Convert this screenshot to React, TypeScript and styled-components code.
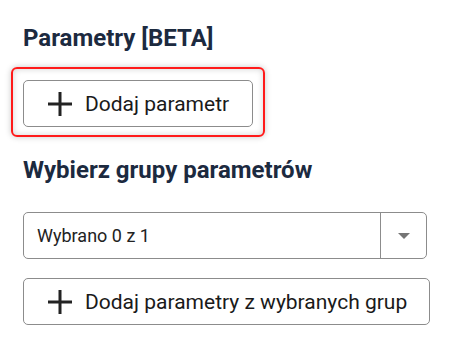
import React from "react";
import styled, { createGlobalStyle } from "styled-components";

const Global = createGlobalStyle`
  html, body { margin: 0; padding: 0; background: #ffffff; }
  body { font-family: Roboto, "Noto Sans", Arial, sans-serif; }
`;

const Page = styled.div`
  display: flex;
  flex-direction: column;
  align-items: flex-start;
  padding: 24px 0 0 23px;
`;

const Heading = styled.h2<{ $mt?: number }>`
  margin: ${(p) => p.$mt ?? 0}px 0 0 0;
  font-size: 24px;
  line-height: 28px;
  font-weight: 700;
  color: #1c2a3f;
`;

const FocusFrame = styled.div`
  margin: 15px 0 0 -12px;
  padding: 11px 10px 8px 10px;
  border: 2px solid #ff1a1a;
  border-radius: 6px;
  box-shadow: 0 0 6px rgba(0, 0, 0, 0.22), inset 0 0 6px rgba(0, 0, 0, 0.18);
`;

const Button = styled.button<{ $w: number; $mt?: number }>`
  display: flex;
  align-items: center;
  gap: 13px;
  box-sizing: border-box;
  width: ${(p) => p.$w}px;
  height: 47px;
  margin-top: ${(p) => p.$mt ?? 0}px;
  padding: 0 0 0 24px;
  background: #ffffff;
  border: 1px solid #8c8c8c;
  border-radius: 5px;
  font-family: Roboto, Arial, sans-serif;
  font-size: 21px;
  color: #1a1a1a;
  cursor: pointer;
`;

const Select = styled.div`
  display: flex;
  box-sizing: border-box;
  width: 404px;
  height: 47px;
  margin-top: 28px;
  border: 1px solid #8c8c8c;
  border-radius: 5px;
  background: #ffffff;
`;

const SelectValue = styled.div`
  flex: 1;
  display: flex;
  align-items: center;
  padding-left: 13px;
  font-size: 18px;
  color: #222222;
`;

const SelectToggle = styled.div`
  width: 45px;
  display: flex;
  align-items: center;
  justify-content: center;
  border-left: 1px solid #8c8c8c;
`;

const Plus = () => (
  <svg width="24" height="24" viewBox="0 0 24 24">
    <rect x="10.5" y="0" width="3" height="24" fill="#222" />
    <rect x="0" y="10.5" width="24" height="3" fill="#222" />
  </svg>
);

const Caret = () => (
  <svg width="12" height="6" viewBox="0 0 12 6">
    <path d="M0 0 L12 0 L6 6 Z" fill="#757575" />
  </svg>
);

export default function App() {
  return (
    <>
      <Global />
      <Page>
        <Heading>Parametry [BETA]</Heading>
        <FocusFrame>
          <Button $w={230}>
            <Plus />
            <span>Dodaj parametr</span>
          </Button>
        </FocusFrame>
        <Heading $mt={19}>Wybierz grupy parametrów</Heading>
        <Select>
          <SelectValue>Wybrano 0 z 1</SelectValue>
          <SelectToggle>
            <Caret />
          </SelectToggle>
        </Select>
        <Button $w={407} $mt={19}>
          <Plus />
          <span>Dodaj parametry z wybranych grup</span>
        </Button>
      </Page>
    </>
  );
}
